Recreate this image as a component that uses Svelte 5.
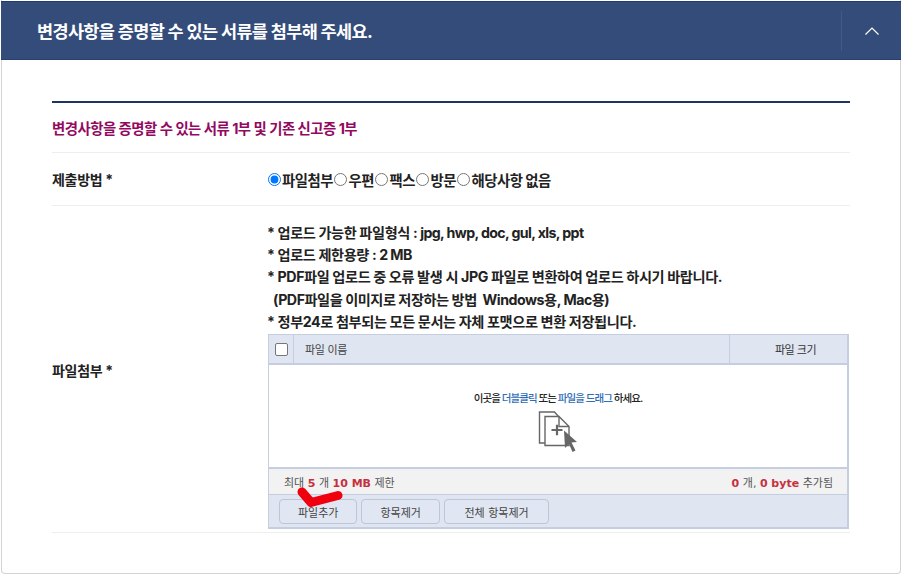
<script>
  const methods = ["파일첨부", "우편", "팩스", "방문", "해당사항 없음"];
  let selected = $state("파일첨부");

  const buttons = ["파일추가", "항목제거", "전체 항목제거"];
</script>

<div class="page">
  <section class="card">
    <header class="head">
      <h2>변경사항을 증명할 수 있는 서류를 첨부해 주세요.</h2>
      <button class="toggle" aria-label="접기">
        <svg width="14" height="8" viewBox="0 0 14 8" fill="none" stroke="#fff" stroke-width="1.2">
          <path d="M0.5 7.5 7 1l6.5 6.5" />
        </svg>
      </button>
    </header>

    <div class="body">
      <h3>변경사항을 증명할 수 있는 서류 1부 및 기존 신고증 1부</h3>

      <div class="row method">
        <div class="label">제출방법 *</div>
        <div class="value radios">
          {#each methods as m}
            <label>
              <input type="radio" name="method" value={m} bind:group={selected} />{m}
            </label>
          {/each}
        </div>
      </div>

      <div class="row files">
        <div class="label">파일첨부 *</div>
        <div class="value">
          <div class="notes">
            <p>* 업로드 가능한 파일형식 : <span class="tight">jpg, hwp, doc, gul, xls, ppt</span></p>
            <p>* 업로드 제한용량 : <span class="tight">2 MB</span></p>
            <p>* PDF파일 업로드 중 오류 발생 시 JPG 파일로 변환하여 업로드 하시기 바랍니다.</p>
            <p class="indent">(PDF파일을 이미지로 저장하는 방법 &nbsp;Windows용, Mac용)</p>
            <p>* 정부24로 첨부되는 모든 문서는 자체 포맷으로 변환 저장됩니다.</p>
          </div>

          <div class="uploader">
            <div class="thead">
              <div class="check"><span class="box"></span></div>
              <div class="name">파일 이름</div>
              <div class="size">파일 크기</div>
            </div>

            <div class="drop">
              <p>이곳을 <em>더블클릭</em> 또는 <em>파일을 드래그</em> 하세요.</p>
              <svg width="40" height="42" viewBox="0 0 40 42" fill="none" stroke="#666" stroke-width="1.4">
                <path d="M7 32H1.500V1h15l4 4.500" />
                <path d="M7 5.500h14l10 10V34.500H7z" fill="#fff" />
                <path d="M21 5.500v10h10" />
                <path d="M13.500 19h11M19 13.800v10.500" stroke-width="2.200" />
                <path d="M26 19.500 39 31l-5.500.5 4 8-3 1.500-3.500-8-4 4z" fill="#666" stroke="none" />
              </svg>
            </div>

            <div class="info">
              <span>최대 <b>5</b> 개 <b>10 MB</b> 제한</span>
              <span><b>0</b> 개, <b>0 byte</b> 추가됨</span>
            </div>

            <div class="actions">
              {#each buttons as b}
                <button>{b}</button>
              {/each}
              <svg class="mark" width="50" height="24" viewBox="0 0 50 24" fill="none" stroke="#f0000f" stroke-width="9" stroke-linecap="round" stroke-linejoin="round">
                <path d="M6 6 15 16.500 42 9.500" />
              </svg>
            </div>
          </div>
        </div>
      </div>
    </div>
  </section>
</div>

<style>
  :global(body) {
    margin: 0;
    background: #fff;
  }
  .page {
    width: 902px;
    height: 576px;
    overflow: hidden;
    font-family: Inter, "Noto Sans CJK KR", sans-serif;
    color: #222;
  }
  .card {
    box-sizing: border-box;
    width: 900px;
    height: 574px;
    margin-left: 1px;
    padding-top: 1px;
    border: 1px solid #d4d4d4;
    border-top: 0;
    border-radius: 0 0 4px 4px;
  }
  .head {
    box-sizing: border-box;
    height: 59px;
    margin: 0 -1px;
    display: flex;
    align-items: center;
    justify-content: space-between;
    background: #344c79;
    border-top: 1px solid #1f3a70;
    border-bottom: 1px solid #27406f;
  }
  .head h2 {
    margin: 0 0 0 36px;
    font-size: 17.500px;
    font-weight: 700;
    letter-spacing: -0.65px;
    color: #fff;
  }
  .toggle {
    width: 60px;
    height: 40px;
    padding: 0;
    background: none;
    border: 0;
    border-left: 1px solid #425a85;
    display: flex;
    align-items: center;
    justify-content: center;
  }
  .body {
    margin: 41px 50px 0 50px;
    border-top: 2px solid #1c3563;
  }
  .body h3 {
    box-sizing: border-box;
    height: 50px;
    margin: 0;
    display: flex;
    align-items: center;
    font-size: 14.400px;
    font-weight: 700;
    letter-spacing: -0.5px;
    color: #92095f;
    border-bottom: 1px solid #eee;
  }
  .row {
    display: flex;
    align-items: center;
    border-bottom: 1px solid #eee;
  }
  .method {
    height: 52px;
  }
  .label {
    width: 216px;
    flex: none;
    font-size: 14px;
    font-weight: 700;
    letter-spacing: -0.3px;
  }
  .radios {
    display: flex;
    font-size: 14.400px;
    font-weight: 700;
    letter-spacing: -0.5px;
  }
  .radios label {
    display: flex;
    align-items: center;
    margin-right: 1.500px;
  }
  .radios input {
    width: 13px;
    height: 13px;
    margin: 0 1px 0 0;
  }
  .files {
    height: 326px;
    align-items: flex-start;
  }
  .files .label {
    align-self: center;
    margin-top: 1px;
  }
  .value {
    flex: 1;
  }
  .notes {
    padding-top: 16px;
    font-size: 14.200px;
    font-weight: 700;
    letter-spacing: -0.4px;
    line-height: 22.200px;
    margin-left: -1px;
  }
  .notes p {
    margin: 0;
    white-space: pre;
  }
  .notes .indent {
    padding-left: 6px;
    letter-spacing: -0.47px;
  }
  .tight {
    letter-spacing: -0.62px;
  }
  .uploader {
    box-sizing: border-box;
    width: 581px;
    height: 195px;
    margin-top: 1px;
    border: 2px solid #c5cee0;
    border-width: 1px 2px 2px 1px;
    font-size: 11px;
    color: #444;
  }
  .thead {
    display: flex;
    height: 30px;
    box-sizing: border-box;
    align-items: center;
    background: #dfe6f1;
    border-bottom: 2px solid #c5cee0;
  }
  .check {
    width: 24px;
    height: 100%;
    display: flex;
    align-items: center;
    justify-content: center;
    border-right: 1px solid #c5cee0;
    margin-right: 11px;
  }
  .box {
    box-sizing: border-box;
    width: 13px;
    height: 13px;
    background: #fff;
    border: 1px solid #767676;
    border-radius: 2px;
  }
  .name {
    flex: 1;
    letter-spacing: -0.3px;
  }
  .size {
    box-sizing: border-box;
    width: 118px;
    height: 100%;
    padding-left: 14px;
    display: flex;
    align-items: center;
    justify-content: center;
    border-left: 1px solid #c5cee0;
    letter-spacing: -0.5px;
    color: #333;
  }
  .drop {
    height: 104px;
    display: flex;
    flex-direction: column;
    align-items: center;
    background: #fff;
    border-bottom: 2px solid #c5cee0;
    box-sizing: border-box;
  }
  .drop p {
    margin: 25px 0 6px;
    font-size: 10.500px;
    font-weight: 500;
    letter-spacing: -0.95px;
    color: #222;
  }
  .drop em {
    font-style: normal;
    color: #2f6db5;
  }
  .info {
    box-sizing: border-box;
    height: 26px;
    padding: 0 14px 0 15px;
    display: flex;
    align-items: center;
    justify-content: space-between;
    background: #f2f2f2;
    border-bottom: 1px solid #c5cee0;
    font-family: "DejaVu Sans", "Noto Sans CJK KR", sans-serif;
    font-size: 11px;
    color: #555;
  }
  .info b {
    color: #c5303e;
  }
  .actions {
    position: relative;
    height: 32px;
    padding: 4px 0 0 10px;
    box-sizing: border-box;
    display: flex;
    gap: 4px;
    background: #dfe6f1;
  }
  .actions button {
    height: 25px;
    padding: 0 18px;
    background: #e0e7f2;
    border: 1px solid #bcc6d8;
    border-radius: 4px;
    font-family: "DejaVu Sans", "Noto Sans CJK KR", sans-serif;
    font-size: 11px;
    color: #444;
  }
  .actions button:last-of-type {
    padding: 0 19.500px;
  }
  .mark {
    position: absolute;
    left: 27px;
    top: -9px;
  }
</style>
